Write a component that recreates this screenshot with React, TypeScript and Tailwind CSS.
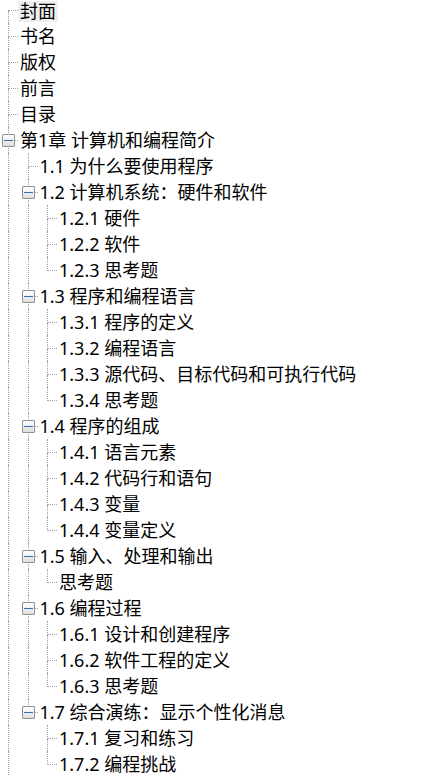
import React from "react"

type Node = { t: string; sel?: boolean; c?: Node[] }

const TREE: Node[] = [
  { t: "封面", sel: true },
  { t: "书名" },
  { t: "版权" },
  { t: "前言" },
  { t: "目录" },
  {
    t: "第1章 计算机和编程简介",
    c: [
      { t: "1.1 为什么要使用程序" },
      {
        t: "1.2 计算机系统：硬件和软件",
        c: [{ t: "1.2.1 硬件" }, { t: "1.2.2 软件" }, { t: "1.2.3 思考题" }],
      },
      {
        t: "1.3 程序和编程语言",
        c: [
          { t: "1.3.1 程序的定义" },
          { t: "1.3.2 编程语言" },
          { t: "1.3.3 源代码、目标代码和可执行代码" },
          { t: "1.3.4 思考题" },
        ],
      },
      {
        t: "1.4 程序的组成",
        c: [
          { t: "1.4.1 语言元素" },
          { t: "1.4.2 代码行和语句" },
          { t: "1.4.3 变量" },
          { t: "1.4.4 变量定义" },
        ],
      },
      { t: "1.5 输入、处理和输出", c: [{ t: "思考题" }] },
      {
        t: "1.6 编程过程",
        c: [{ t: "1.6.1 设计和创建程序" }, { t: "1.6.2 软件工程的定义" }, { t: "1.6.3 思考题" }],
      },
      { t: "1.7 综合演练：显示个性化消息", c: [{ t: "1.7.1 复习和练习" }, { t: "1.7.2 编程挑战" }] },
    ],
  },
]

type Row = {
  t: string
  sel?: boolean
  guides: boolean[]
  first: boolean
  last: boolean
  open: boolean
}

function flatten(nodes: Node[], guides: boolean[], root: boolean, out: Row[]) {
  nodes.forEach((n, i) => {
    // root list keeps going below the visible area (第2章 ...)
    const last = root ? false : i === nodes.length - 1
    out.push({ t: n.t, sel: n.sel, guides, first: root && i === 0, last, open: !!n.c })
    if (n.c) flatten(n.c, [...guides, !last], false, out)
  })
  return out
}

const ROWS = flatten(TREE, [], true, [])

function Expander() {
  return (
    <div className="absolute left-[2px] top-[7px] w-[13px] h-[13px] border border-[#919191] rounded-[1px] bg-gradient-to-b from-white to-[#dedede] flex items-center justify-center">
      <div className="w-[9px] h-px bg-[#3f66b0]" />
    </div>
  )
}

export default function App() {
  return (
    <div
      className="min-h-screen bg-white overflow-hidden text-black"
      style={{ fontFamily: '"Noto Sans", "Noto Sans CJK SC", sans-serif' }}
    >
      <div className="flex flex-col">
        {ROWS.map((r, i) => (
          <div key={i} className={`flex items-center ${r.first ? "h-[23px]" : "h-[26px]"}`}>
            {r.guides.map((g, d) => (
              <div key={d} className="w-[19.5px] h-full pl-[8px] shrink-0">
                {g && <div className="h-full border-l border-dotted border-[#a0a0a0]" />}
              </div>
            ))}
            <div className="relative w-[18px] h-full pl-[8px] shrink-0 flex flex-col">
              <div
                className={`border-b border-dotted border-[#a0a0a0] ${
                  r.first ? "h-[11px]" : "h-[14px] border-l"
                }`}
              />
              <div className={`flex-1 border-dotted border-[#a0a0a0] ${r.last ? "" : "border-l"}`} />
              {r.open && <Expander />}
            </div>
            <span
              className={`px-[2px] h-[21px] flex items-center text-[18px] leading-[21px] whitespace-nowrap ${
                r.sel ? "bg-[#efefef]" : ""
              }`}
            >
              {r.t}
            </span>
          </div>
        ))}
      </div>
    </div>
  )
}
